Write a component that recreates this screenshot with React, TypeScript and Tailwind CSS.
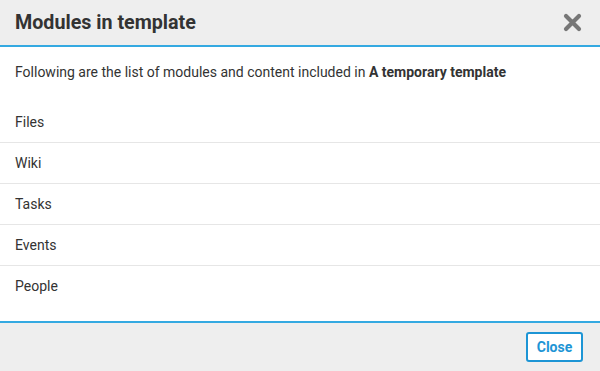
const MODULES = ['Files', 'Wiki', 'Tasks', 'Events', 'People']

export default function App() {
  return (
    <div className="w-[600px] h-[371px] bg-white flex flex-col overflow-hidden font-['Roboto',sans-serif] text-[#333]">
      {/* header */}
      <div className="h-[47px] flex-shrink-0 bg-[#eeeeee] border-b-2 border-[#34a9e1] flex items-center justify-between pl-[15px] pr-[18px]">
        <span className="text-[19.7px] font-bold leading-none">Modules in template</span>
        <button className="text-[#777]" title="Close">
          <svg width="19" height="19" viewBox="0 0 19 19">
            <path d="M3 3 L16 16 M16 3 L3 16" stroke="currentColor" strokeWidth="4.2" strokeLinecap="round" />
          </svg>
        </button>
      </div>

      {/* body */}
      <div className="flex-1 px-[15px] pt-[15px]">
        <p className="text-[14px] leading-[20px]">
          Following are the list of modules and content included in <b className="font-bold">A temporary template</b>
        </p>
        <ul className="mt-[20px] -mx-[15px]">
          {MODULES.map((m, i) => (
            <li
              key={m}
              className={
                'h-[41px] px-[15px] flex items-center text-[14px] ' +
                (i < MODULES.length - 1 ? 'border-b border-[#e6e6e6]' : '')
              }
            >
              {m}
            </li>
          ))}
        </ul>
      </div>

      {/* footer */}
      <div className="h-[50px] flex-shrink-0 bg-[#eeeeee] border-t-2 border-[#34a9e1] flex items-center justify-end pr-[17px]">
        <button className="h-[30px] w-[57px] rounded-[3px] border-2 border-[#1d95d5] text-[#1d95d5] text-[14px] font-bold bg-white">
          Close
        </button>
      </div>
    </div>
  )
}
